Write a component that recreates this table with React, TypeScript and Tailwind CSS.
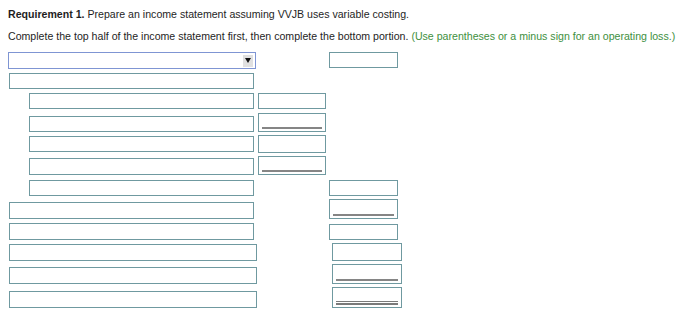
import React from "react";

const box = "border border-[#6f99a0] bg-white shrink-0";

function Line({ double }: { double?: boolean }) {
  return (
    <div className="absolute left-[3px] right-[3px] bottom-[2px] flex flex-col gap-[1px]">
      <div className={double ? "h-[1px] bg-[#7a7a7a]" : "h-[2px] bg-[#858585]"} />
      {double && <div className="h-[2px] bg-[#7a7a7a]" />}
    </div>
  );
}

export default function App() {
  return (
    <div className="w-[700px] h-[313px] bg-white font-['Liberation_Sans',Arial,sans-serif] text-[10.6px] leading-[12px] text-[#1e1e1e] overflow-hidden">
      <div className="pt-[8px] pl-[8px]">
        <span className="font-bold">Requirement 1.</span> Prepare an income statement assuming VVJB uses variable costing.
      </div>
      <div className="mt-[10px] pl-[8px]">
        Complete the top half of the income statement first, then complete the bottom portion.{" "}
        <span className="text-[#3e8f3e]">(Use parentheses or a minus sign for an operating loss.)</span>
      </div>

      {/* heading select + total */}
      <div className="mt-[10px] flex h-[17px] items-start">
        <div className="ml-[8px] w-[248px] h-[17px] border border-[#7f95d3] bg-white flex items-center justify-end pr-[2px] shrink-0">
          <div className="w-[10px] h-[12px] bg-[#e0e0e0] flex items-center justify-center">
            <svg width="6" height="5" viewBox="0 0 6 5"><path d="M0 0h6L3 5z" fill="#111" /></svg>
          </div>
        </div>
        <div className={`${box} ml-[73px] w-[69px] h-[16px]`} />
      </div>

      {/* section label */}
      <div className="mt-[4px] flex h-[16px]">
        <div className={`${box} ml-[9px] w-[245px] h-[16px]`} />
      </div>

      {/* detail rows with amounts */}
      <div className="mt-[4px] flex h-[16px] items-center">
        <div className={`${box} ml-[29px] w-[225px] h-[16px]`} />
        <div className={`${box} ml-[4px] w-[68px] h-[16px]`} />
      </div>
      <div className="mt-[4px] flex h-[19px] items-center">
        <div className={`${box} ml-[29px] w-[225px] h-[16px] mt-[3px]`} />
        <div className={`${box} relative ml-[4px] w-[68px] h-[19px]`}>
          <Line />
        </div>
      </div>
      <div className="mt-[3px] flex h-[18px] items-center">
        <div className={`${box} ml-[29px] w-[225px] h-[16px]`} />
        <div className={`${box} ml-[4px] w-[68px] h-[18px]`} />
      </div>
      <div className="mt-[3px] flex h-[19px] items-center">
        <div className={`${box} ml-[29px] w-[225px] h-[17px] mt-[2px]`} />
        <div className={`${box} relative ml-[4px] w-[68px] h-[19px]`}>
          <Line />
        </div>
      </div>

      {/* subtotal rows */}
      <div className="mt-[5px] flex h-[16px] items-center">
        <div className={`${box} ml-[29px] w-[225px] h-[16px]`} />
        <div className={`${box} ml-[75px] w-[69px] h-[16px]`} />
      </div>
      <div className="mt-[3px] flex h-[20px] items-end">
        <div className={`${box} ml-[9px] w-[245px] h-[17px]`} />
        <div className={`${box} relative ml-[75px] w-[69px] h-[20px]`}>
          <Line />
        </div>
      </div>
      <div className="mt-[4px] flex h-[17px] items-center">
        <div className={`${box} ml-[9px] w-[245px] h-[17px]`} />
        <div className={`${box} ml-[75px] w-[69px] h-[16px]`} />
      </div>

      {/* bottom portion */}
      <div className="mt-[3px] flex h-[18px] items-center">
        <div className={`${box} ml-[9px] w-[248px] h-[17px] mt-[1px]`} />
        <div className={`${box} ml-[75px] w-[70px] h-[18px]`} />
      </div>
      <div className="mt-[3px] flex h-[20px] items-end">
        <div className={`${box} ml-[9px] w-[248px] h-[17px]`} />
        <div className={`${box} relative ml-[75px] w-[70px] h-[20px]`}>
          <Line />
        </div>
      </div>
      <div className="mt-[3px] flex h-[21px] items-end">
        <div className={`${box} ml-[9px] w-[248px] h-[17px]`} />
        <div className={`${box} relative ml-[75px] w-[70px] h-[21px]`}>
          <Line double />
        </div>
      </div>
    </div>
  );
}
